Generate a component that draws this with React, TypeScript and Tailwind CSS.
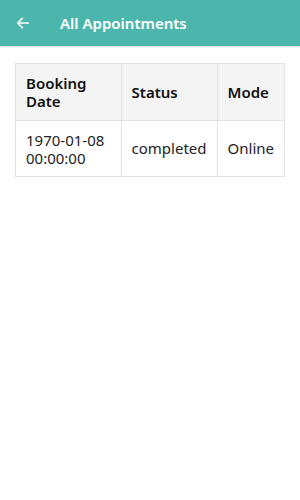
import React from "react";

export default function App() {
  return (
    <div className="w-[300px] h-[500px] bg-white" style={{ fontFamily: '"Noto Sans", "Open Sans", sans-serif' }}>
      <div className="h-[46px] bg-[#4db6ac] flex items-center shadow-[0_1px_2px_rgba(0,0,0,0.15)]">
        <svg className="ml-[15px] w-[16px] h-[16px]" viewBox="0 0 24 24" fill="none" stroke="white" strokeWidth="2.6" strokeLinecap="round" strokeLinejoin="round">
          <path d="M20 12H5M11 5l-7 7 7 7" />
        </svg>
        <span className="ml-[29px] text-white text-[15px] font-semibold">All Appointments</span>
      </div>
      <div className="px-[15px] pt-[17px]">
        <table className="w-[270px] border-collapse text-[15px] text-[#111]">
          <thead>
            <tr className="bg-[#f4f4f4]">
              <th className="w-[108px] h-[57px] border border-[#e2e2e2] px-[10px] text-left font-semibold leading-[18px]">Booking Date</th>
              <th className="w-[95px] border border-[#e2e2e2] px-[10px] text-left font-semibold">Status</th>
              <th className="border border-[#e2e2e2] px-[10px] text-left font-semibold">Mode</th>
            </tr>
          </thead>
          <tbody>
            <tr>
              <td className="h-[56px] border border-[#e2e2e2] px-[10px] leading-[18px] text-[#222]">1970-01-08 00:00:00</td>
              <td className="border border-[#e2e2e2] px-[10px] text-[#222]">completed</td>
              <td className="border border-[#e2e2e2] px-[10px] text-[#222]">Online</td>
            </tr>
          </tbody>
        </table>
      </div>
    </div>
  );
}
